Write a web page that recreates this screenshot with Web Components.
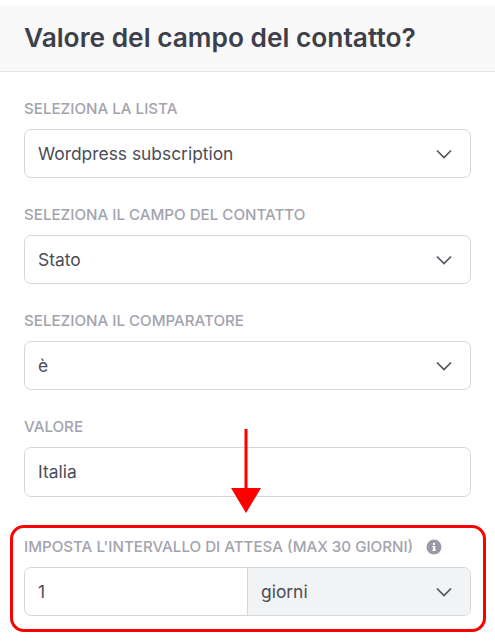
<!DOCTYPE html>
<html>
<head>
<meta charset="utf-8">
<style>
  html, body { margin: 0; background: #fff; }
  body { width: 495px; height: 641px; overflow: hidden; position: relative; font-family: Inter, "Liberation Sans", sans-serif; }
  form-field[info] { margin-top: 13px; }
</style>
</head>
<body>
<contact-panel heading="Valore del campo del contatto?">
  <form-field label="SELEZIONA LA LISTA"><select-box>Wordpress subscription</select-box></form-field>
  <form-field label="SELEZIONA IL CAMPO DEL CONTATTO"><select-box>Stato</select-box></form-field>
  <form-field label="SELEZIONA IL COMPARATORE"><select-box>è</select-box></form-field>
  <form-field label="VALORE"><text-box>Italia</text-box></form-field>
  <form-field label="IMPOSTA L'INTERVALLO DI ATTESA (MAX 30 GIORNI)" info><wait-box value="1" unit="giorni"></wait-box></form-field>
</contact-panel>
<red-callout></red-callout>
<script>
const chevron = `<svg width="16" height="10" viewBox="0 0 16 10" fill="none" stroke="#53555f" stroke-width="1.7"><path d="M1 1.5l7 7 7-7"/></svg>`;

customElements.define("contact-panel", class extends HTMLElement {
  constructor() {
    super();
    this.attachShadow({ mode: "open" }).innerHTML = `
      <style>
        :host { display: block; padding-top: 5px; color: #3d404a; }
        header { height: 67px; box-sizing: border-box; background: #f9f9fa; border-bottom: 1px solid #e3e4e6; padding: 0 24px 1px; display: flex; align-items: center; }
        h1 { margin: 0; font-size: 26.3px; line-height: 32px; font-weight: 600; color: #3d404a; white-space: nowrap; }
        .body { padding: 27px 24px 0; display: flex; flex-direction: column; gap: 27px; }
      </style>
      <header><h1>${this.getAttribute("heading")}</h1></header>
      <div class="body"><slot></slot></div>`;
  }
});

customElements.define("form-field", class extends HTMLElement {
  constructor() {
    super();
    const info = this.hasAttribute("info") ? `<svg class="info" width="16" height="16" viewBox="0 0 16 16"><circle cx="8" cy="8" r="7.5" fill="#9a9aa6"/><rect x="7" y="7" width="2.2" height="4.6" fill="#fff"/><rect x="6.2" y="7" width="2" height="1" fill="#fff"/><rect x="6.2" y="10.8" width="3.8" height="1" fill="#fff"/><circle cx="8" cy="4.9" r="1.2" fill="#fff"/></svg>` : "";
    this.attachShadow({ mode: "open" }).innerHTML = `
      <style>
        :host { display: block; }
        .label { display: flex; align-items: center; gap: 13px; height: 20px; margin-bottom: 10px; font-size: 15.15px; line-height: 20px; font-weight: 500; color: #a3a3ae; white-space: nowrap; }
      </style>
      <div class="label"><span>${this.getAttribute("label")}</span>${info}</div>
      <slot></slot>`;
  }
});

customElements.define("select-box", class extends HTMLElement {
  constructor() {
    super();
    this.attachShadow({ mode: "open" }).innerHTML = `
      <style>
        :host { display: flex; align-items: center; justify-content: space-between; box-sizing: border-box; height: 49px; padding: 0 18px 0 13px; border: 1px solid #d6d7da; border-radius: 7px; background: #fff; font-size: 17.4px; color: #4b4d57; }
      </style>
      <slot></slot>${chevron}`;
  }
});

customElements.define("text-box", class extends HTMLElement {
  constructor() {
    super();
    this.attachShadow({ mode: "open" }).innerHTML = `
      <style>
        :host { display: flex; align-items: center; box-sizing: border-box; height: 50px; padding: 0 13px 1px; border: 1px solid #d6d7da; border-radius: 7px; background: #fff; font-size: 17.4px; color: #4b4d57; }
      </style>
      <slot></slot>`;
  }
});

customElements.define("wait-box", class extends HTMLElement {
  constructor() {
    super();
    this.attachShadow({ mode: "open" }).innerHTML = `
      <style>
        :host { display: grid; grid-template-columns: 222px 1fr; box-sizing: border-box; height: 49px; border: 1px solid #d6d7da; border-radius: 7px; overflow: hidden; font-size: 17.4px; color: #4b4d57; background: #fff; }
        .value { display: flex; align-items: center; padding-left: 13px; }
        .unit { display: flex; align-items: center; justify-content: space-between; padding: 0 18px 0 13px; background: #f2f3f5; border-left: 1px solid #d6d7da; }
      </style>
      <div class="value">${this.getAttribute("value")}</div>
      <div class="unit"><span>${this.getAttribute("unit")}</span>${chevron}</div>`;
  }
});

// arrow and frame lie over the form
customElements.define("red-callout", class extends HTMLElement {
  constructor() {
    super();
    this.attachShadow({ mode: "open" }).innerHTML = `
      <style>
        :host { position: absolute; inset: 0; pointer-events: none; }
        svg { position: absolute; left: 231px; top: 429px; }
        .frame { position: absolute; left: 10px; top: 525px; width: 476px; height: 107px; box-sizing: border-box; border: 3px solid #fe0000; border-radius: 14px; }
      </style>
      <svg width="30" height="85" viewBox="0 0 30 85"><rect x="13.5" y="0" width="3" height="62" fill="#fe0000"/><path d="M0 59h30L15 84z" fill="#fe0000"/></svg>
      <div class="frame"></div>`;
  }
});
</script>
</body>
</html>
